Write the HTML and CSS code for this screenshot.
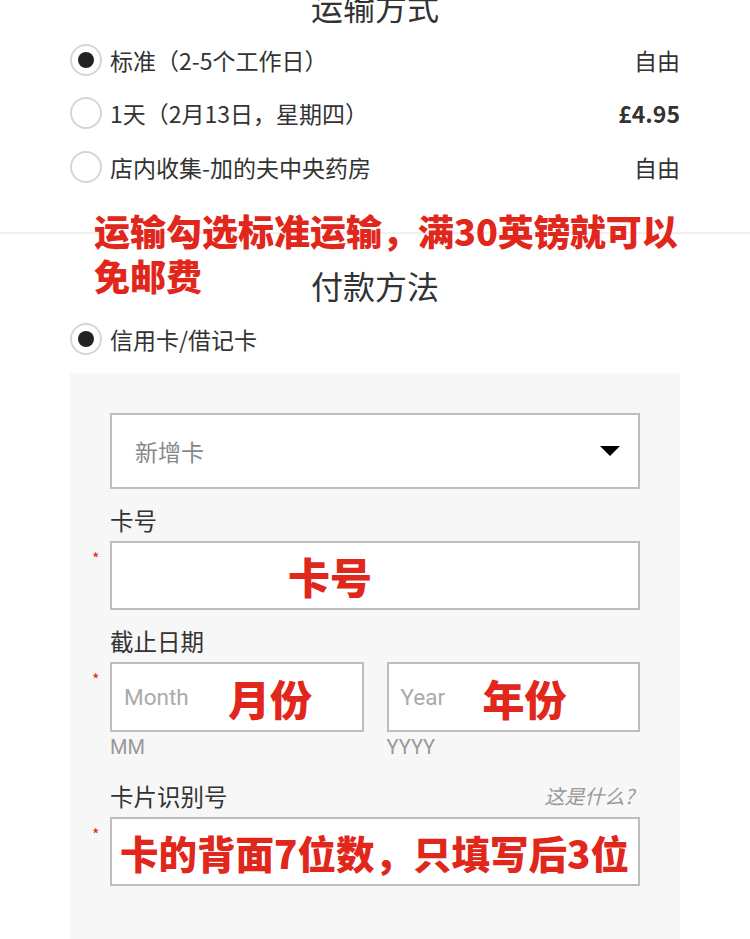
FILE: index.html
```html
<!DOCTYPE html>
<html lang="zh">
<head>
<meta charset="utf-8">
<link rel="stylesheet" href="styles.css">
</head>
<body>
<div class="page">
  <section class="shipping">
    <h2 class="sec-title shipping-title">运输方式</h2>
    <div class="opt">
      <span class="radio checked"></span>
      <span class="opt-label">标准（2-5个工作日）</span>
      <span class="opt-price">自由</span>
    </div>
    <div class="opt">
      <span class="radio"></span>
      <span class="opt-label">1天（2月13日，星期四）</span>
      <span class="opt-price bold">£4.95</span>
    </div>
    <div class="opt">
      <span class="radio"></span>
      <span class="opt-label">店内收集-加的夫中央药房</span>
      <span class="opt-price">自由</span>
    </div>
  </section>
  <div class="divider"></div>
  <section class="payment">
    <div class="note">运输勾选标准运输，满30英镑就可以<br>免邮费</div>
    <h2 class="sec-title pay-title">付款方法</h2>
    <div class="opt pay-opt">
      <span class="radio checked"></span>
      <span class="opt-label">信用卡/借记卡</span>
    </div>
    <div class="panel">
      <div class="select">
        <span class="select-text">新增卡</span>
        <span class="caret"></span>
      </div>
      <div class="field card">
        <div class="label">卡号</div>
        <div class="input req"><span class="red big center-red">卡号</span></div>
      </div>
      <div class="field expiry">
        <div class="label">截止日期</div>
        <div class="pair">
          <div class="half">
            <div class="input req"><span class="ph ph-month">Month</span><span class="red big">月份</span></div>
            <div class="hint">MM</div>
          </div>
          <div class="half">
            <div class="input"><span class="ph ph-year">Year</span><span class="red big">年份</span></div>
            <div class="hint">YYYY</div>
          </div>
        </div>
      </div>
      <div class="field cvv">
        <div class="label label-row"><span>卡片识别号</span><span class="what">这是什么?</span></div>
        <div class="input req"><span class="red cvv-red">卡的背面7位数，只填写后3位</span></div>
      </div>
    </div>
  </section>
</div>
</body>
</html>
```
FILE: styles.css
```css
* { box-sizing: border-box; }
html, body { margin: 0; padding: 0; background: #fff; }
body {
  font-family: "Noto Sans CJK SC", "Noto Sans", sans-serif;
  color: #333;
  overflow: hidden;
  height: 939px;
  text-spacing-trim: space-all;
}
.page { width: 750px; }
.sec-title {
  margin: 0;
  font-weight: 400;
  font-size: 32px;
  line-height: 40px;
  text-align: center;
  color: #333;
}
.shipping { padding: 0 70px; }
.shipping-title { margin-top: -14px; margin-bottom: 7px; }
.opt {
  display: flex;
  align-items: center;
  height: 53.5px;
}
.radio {
  width: 32px;
  height: 32px;
  border: 2px solid #d6d6d6;
  border-radius: 50%;
  display: flex;
  align-items: center;
  justify-content: center;
  flex: none;
  margin-right: 8px;
}
.radio.checked::after {
  content: "";
  width: 16px;
  height: 16px;
  border-radius: 50%;
  background: #222;
}
.opt-label { font-size: 23px; flex: 1; color: #333; white-space: nowrap; }
.opt-price { font-size: 23px; color: #333; }
.opt-price.bold { font-weight: 700; }
.divider {
  margin-top: 38px;
  height: 2px;
  background: #f0f0f0;
}
.payment { position: relative; padding: 31.5px 70px 0; }
.note {
  position: absolute;
  left: 94px;
  top: -26px;
  font-size: 36px;
  line-height: 45px;
  font-weight: 900;
  color: #e1261c;
  white-space: nowrap;
}
.pay-opt { margin-top: 7px; }
.panel {
  margin-top: 7.5px;
  background: #f7f7f7;
  padding: 40px 40px 60px;
}
.select {
  height: 76px;
  background: #fff;
  border: 2px solid #bdbdbd;
  display: flex;
  align-items: center;
  padding: 0 18px 0 23px;
}
.select-text { flex: 1; font-size: 23px; color: #888; }
.caret {
  width: 0; height: 0;
  border-left: 10px solid transparent;
  border-right: 10px solid transparent;
  border-top: 10px solid #000;
}
.label { font-size: 23.5px; line-height: 30px; color: #333; margin-bottom: 6px; }
.card { margin-top: 16px; }
.expiry { margin-top: 16px; }
.cvv { margin-top: 19px; }
.label-row { display: flex; justify-content: space-between; align-items: center; }
.what { font-size: 20px; color: #999; font-style: italic; margin-right: 6px; }
.input {
  position: relative;
  height: 70px;
  background: #fff;
  border: 2px solid #bdbdbd;
  display: flex;
  align-items: center;
}
.card .input, .cvv .input { height: 69px; }
.input.req::before {
  content: "*";
  position: absolute;
  left: -20px;
  top: 3px;
  color: #e1261c;
  font-size: 16px;
}
.pair { display: flex; gap: 23px; }
.half { flex: 1; }
.ph {
  font-family: "Roboto", "Noto Sans", sans-serif;
  font-size: 22.5px;
  color: #aaa;
  margin-left: 12px;
}
.ph-month { width: 104px; }
.ph-year { width: 82px; }
.hint {
  font-family: "Roboto", "Noto Sans", sans-serif;
  font-size: 20px;
  color: #999;
  line-height: 30px;
}
.red { color: #e1261c; font-weight: 900; }
.big { font-size: 42px; }
.center-red { margin-left: 176px; }
.cvv-red { font-size: 38.5px; margin-left: 8px; white-space: nowrap; }
```
